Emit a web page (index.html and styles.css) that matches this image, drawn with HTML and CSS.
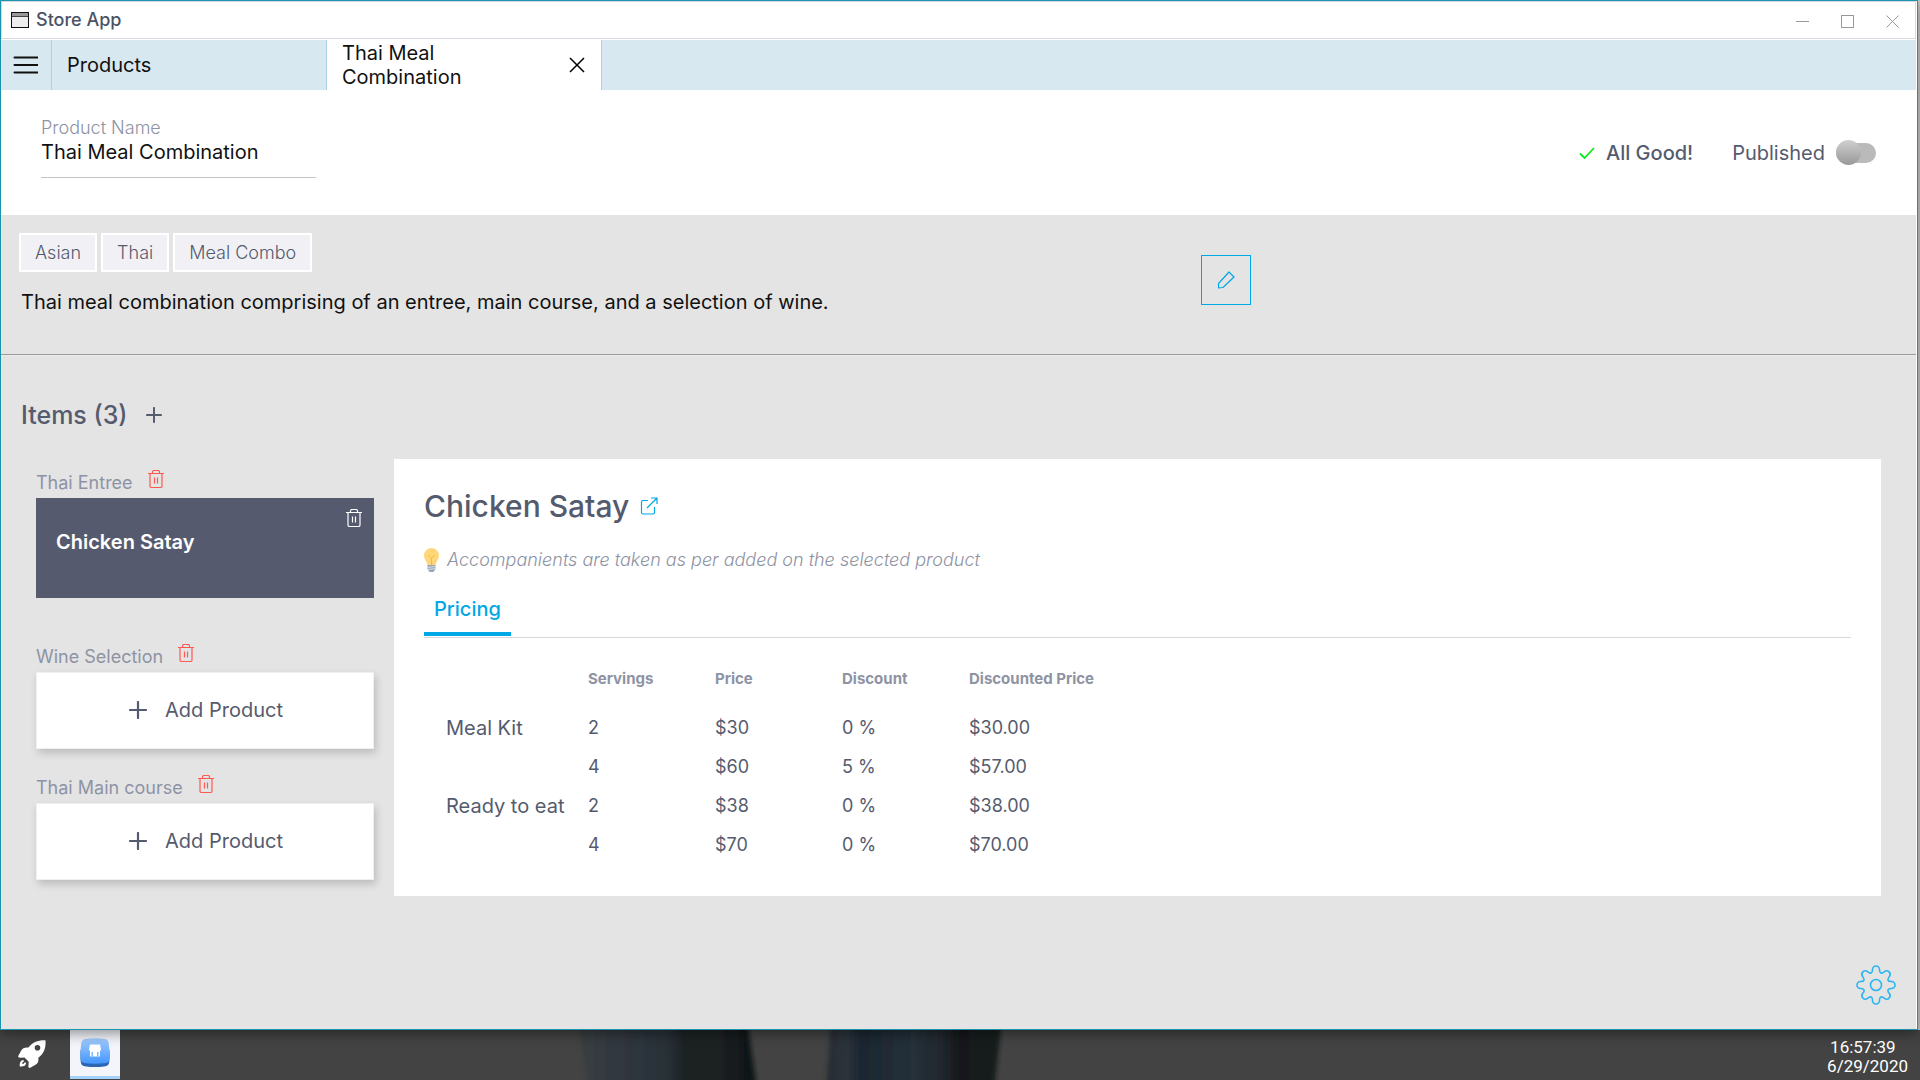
FILE: index.html
```html
<!DOCTYPE html>
<html lang="en">
<head>
<meta charset="utf-8">
<title>Store App</title>
<meta name="viewport" content="width=device-width, initial-scale=1">
<link rel="stylesheet" href="styles.css">
</head>
<body>
<svg class="defs" aria-hidden="true">
  <symbol id="trash" viewBox="0 0 16 18">
    <path d="M2 4v12q0 1.500 1.500 1.500h9q1.500 0 1.500-1.500V4M4.500 3.500V2Q4.500.500 6 .500h4q1.500 0 1.500 1.500v1.500M6.500 7.500v6M9.500 7.500v6M0 3.500h16" fill="none" stroke="currentColor" stroke-width="1.200"/>
  </symbol>
  <symbol id="plus" viewBox="0 0 18 18">
    <path d="M9 1v16M1 9h16" fill="none" stroke="currentColor" stroke-width="2.200" stroke-linecap="round"/>
  </symbol>
</svg>
<div class="desktop">
  <div class="window">
    <header class="titlebar">
      <svg class="app-icon" viewBox="0 0 18 16" aria-hidden="true">
        <rect x=".5" y=".5" width="17" height="15" fill="#eee" stroke="#111"/>
        <path d="M1 2.500h16" stroke="#999" stroke-width="3"/>
        <path d="M1 4.500h16" stroke="#444"/>
      </svg>
      <h1 class="app-title">Store App</h1>
      <button class="window-button" aria-label="Minimize"><svg viewBox="0 0 13 13"><path d="M0 6.500h13"/></svg></button>
      <button class="window-button" aria-label="Maximize"><svg viewBox="0 0 13 13"><rect x=".5" y=".5" width="12" height="12"/></svg></button>
      <button class="window-button" aria-label="Close"><svg viewBox="0 0 13 13"><path d="M.5.5l12 12M12.500.5l-12 12"/></svg></button>
    </header>

    <nav class="tabs">
      <button class="menu-button" aria-label="Menu">
        <svg viewBox="0 0 24 18"><path d="M1 1.500h23M1 9h23M1 16.500h23" fill="none" stroke="#111" stroke-width="2" stroke-linecap="round"/></svg>
      </button>
      <div class="tab"><a class="tab-link" href="#products">Products</a></div>
      <div class="tab tab-active">
        <a class="tab-link" href="#combination">Thai Meal Combination</a>
        <button class="tab-close" aria-label="Close tab">
          <svg viewBox="0 0 16 16"><path d="M1 1l14 14M15 1L1 15" fill="none" stroke="#000" stroke-width="1.500"/></svg>
        </button>
      </div>
    </nav>

    <section class="product-bar">
      <div class="field">
        <label for="product-name">Product Name</label>
        <input id="product-name" type="text" value="Thai Meal Combination">
      </div>
      <div class="status">
        <svg class="check" viewBox="0 0 16 12" aria-hidden="true"><path d="M1 6.500l4.500 4.500L15 1" fill="none" stroke="#0bea1b" stroke-width="1.800"/></svg>
        <span>All Good!</span>
      </div>
      <div class="publish">
        <label for="published">Published</label>
        <input id="published" class="switch" type="checkbox">
      </div>
    </section>

    <main class="content">
      <section class="summary">
        <div>
          <ul class="tags">
            <li>Asian</li>
            <li>Thai</li>
            <li>Meal Combo</li>
          </ul>
          <p class="description">Thai meal combination comprising of an entree, main course, and a selection of wine.</p>
        </div>
        <button class="edit-button" aria-label="Edit">
          <svg viewBox="0 0 18 18"><path d="M1.500 12.500L12 1l5 5L6 16.500l-4.500.5z" fill="none" stroke="currentColor" stroke-width="1.200" stroke-linejoin="round"/></svg>
        </button>
      </section>

      <div class="items-heading">
        <h2>Items (3)</h2>
        <button class="icon-button" aria-label="Add item"><svg class="plus-small"><use href="#plus"/></svg></button>
      </div>

      <div class="items">
        <div class="item-list">
          <section class="item">
            <div class="item-label"><h3>Thai Entree</h3><button class="icon-button" aria-label="Delete Thai Entree"><svg class="trash trash-red"><use href="#trash"/></svg></button></div>
            <div class="selected-card">
              <span>Chicken Satay</span>
              <button class="icon-button" aria-label="Remove Chicken Satay"><svg class="trash"><use href="#trash"/></svg></button>
            </div>
          </section>
          <section class="item">
            <div class="item-label"><h3>Wine Selection</h3><button class="icon-button" aria-label="Delete Wine Selection"><svg class="trash trash-red"><use href="#trash"/></svg></button></div>
            <button class="add-card"><svg class="plus"><use href="#plus"/></svg>Add Product</button>
          </section>
          <section class="item">
            <div class="item-label"><h3>Thai Main course</h3><button class="icon-button" aria-label="Delete Thai Main course"><svg class="trash trash-red"><use href="#trash"/></svg></button></div>
            <button class="add-card"><svg class="plus"><use href="#plus"/></svg>Add Product</button>
          </section>
        </div>

        <article class="panel">
          <div class="panel-title">
            <h2>Chicken Satay</h2>
            <a href="#chicken-satay" aria-label="Open product">
              <svg viewBox="0 0 18 18"><path d="M8 3.500H3Q1.500 3.500 1.500 5v10.500Q1.500 17 3 17h10q1.500 0 1.500-1.500V10M7 11L16.500 1.500M11 1h6v6" fill="none" stroke="currentColor" stroke-width="1.200"/></svg>
            </a>
          </div>
          <p class="note">
            <svg viewBox="0 0 15 24" aria-hidden="true">
              <path d="M7.500 0a7.500 7.500 0 0 1 7.500 7.500c0 3.500-2.500 5.500-3.500 9.500h-8C2.500 13 0 11 0 7.500A7.500 7.500 0 0 1 7.500 0z" fill="#ffd77a"/>
              <path d="M4.500 7L7.500 10.500 10.500 7M7.500 10v7" fill="none" stroke="#f2bd3c"/>
              <path d="M3.500 17h8v4l-2 3h-4l-2-3z" fill="#9aa7b4"/>
              <path d="M3.500 19.500l8-1M3.500 21.500l8-1" stroke="#d5dce2"/>
            </svg>
            <em>Accompanients are taken as per added on the selected product</em>
          </p>
          <div class="panel-tabs"><button class="panel-tab">Pricing</button></div>
          <table class="pricing">
            <thead>
              <tr><td></td><th scope="col">Servings</th><th scope="col">Price</th><th scope="col">Discount</th><th scope="col">Discounted Price</th></tr>
            </thead>
            <tbody>
              <tr><th scope="row">Meal Kit</th><td>2</td><td>$30</td><td>0 %</td><td>$30.00</td></tr>
              <tr><td></td><td>4</td><td>$60</td><td>5 %</td><td>$57.00</td></tr>
              <tr><th scope="row">Ready to eat</th><td>2</td><td>$38</td><td>0 %</td><td>$38.00</td></tr>
              <tr><td></td><td>4</td><td>$70</td><td>0 %</td><td>$70.00</td></tr>
            </tbody>
          </table>
        </article>
      </div>

      <button class="settings-button" aria-label="Settings">
        <svg viewBox="-20 -20 40 40" fill="none" stroke="currentColor" stroke-width="1.600" stroke-linejoin="round">
          <circle r="5.500"/>
          <path d="M-3.500 -15.500A3.500 3.500 0 0 1 3.500 -15.500C3.500 -11.500 5.500 -10.800 8.500 -13.400A3.500 3.500 0 0 1 13.400 -8.500C10.800 -5.500 11.500 -3.500 15.500 -3.500A3.500 3.500 0 0 1 15.500 3.500C11.500 3.500 10.800 5.500 13.400 8.500A3.500 3.500 0 0 1 8.500 13.400C5.500 10.800 3.500 11.500 3.500 15.500A3.500 3.500 0 0 1 -3.500 15.500C-3.500 11.500 -5.500 10.800 -8.500 13.400A3.500 3.500 0 0 1 -13.400 8.500C-10.800 5.500 -11.500 3.500 -15.500 3.500A3.500 3.500 0 0 1 -15.500 -3.500C-11.500 -3.500 -10.800 -5.500 -13.400 -8.500A3.500 3.500 0 0 1 -8.500 -13.400C-5.500 -10.800 -3.500 -11.500 -3.500 -15.500Z"/>
        </svg>
      </button>
    </main>
  </div>
</div>

<footer class="taskbar">
  <svg class="wallpaper" viewBox="0 0 1920 50" preserveAspectRatio="none" aria-hidden="true">
    <defs>
      <linearGradient id="leg-a"><stop offset="0" stop-color="#3a3e41"/><stop offset=".2" stop-color="#32383f"/><stop offset=".5" stop-color="#283038"/><stop offset=".6" stop-color="#1c2224"/><stop offset=".8" stop-color="#1b2022"/><stop offset=".95" stop-color="#101618"/></linearGradient>
      <linearGradient id="leg-b"><stop offset="0" stop-color="#272d33"/><stop offset=".12" stop-color="#2b323b"/><stop offset=".2" stop-color="#1c2731"/><stop offset=".5" stop-color="#25303a"/><stop offset=".66" stop-color="#20272d"/><stop offset=".76" stop-color="#16191b"/><stop offset=".95" stop-color="#181b1c"/></linearGradient>
      <filter id="soften"><feGaussianBlur stdDeviation="2"/></filter>
    </defs>
    <g filter="url(#soften)">
      <path d="M578 -10H747L757 60H588Z" fill="url(#leg-a)"/>
      <path d="M831 -10H1002L994 60H826Z" fill="url(#leg-b)"/>
    </g>
  </svg>
  <button class="launcher" aria-label="Launcher">
    <svg viewBox="0 0 28 28" aria-hidden="true">
      <path d="M27.500.3C20 0 14.500 2 10.500 7.500 7 7 4.500 8 3.200 10.500L.5 15.500c-.8 1.500 0 2.200 1.500 2.200l4.500-.2 4.200 4.200-.3 4.500c0 1.500.9 2.200 2.300 1.400l4.800-2.800c2.400-1.400 3.300-3.600 2.800-7C26 13.500 28 8 27.500.3zM19.500 5a2.800 2.800 0 1 1 0 5.600 2.800 2.800 0 0 1 0-5.600z" fill="#fff" fill-rule="evenodd"/>
      <path d="M5.500 20C2.500 20 1.500 23 1.800 26.500c3.500.3 6.300-.8 6.300-3.800l-1.400-.5c-.4 1-1.300 1.800-2.300 1.800-.3-1.200.4-2.300 1.600-2.500z" fill="#fff"/>
    </svg>
  </button>
  <button class="running-app" aria-label="Store App">
    <svg viewBox="0 0 30 30" aria-hidden="true">
      <defs><linearGradient id="tile" x2="0" y2="1"><stop offset="0" stop-color="#a4cdff"/><stop offset="1" stop-color="#4496ff"/></linearGradient></defs>
      <path d="M.5 12Q0 26 2 27q2 2 13 2t13-2q2-1 1.500-15z" fill="#2a66b5"/>
      <path d="M5 1Q15-.5 25 1q3 .5 3.700 4 1.300 9 .6 17-.3 2.500-3.300 3-11 1.500-22 0-3-.5-3.300-3Q0 14 1.300 5 2 1.500 5 1z" fill="url(#tile)"/>
      <path d="M10 6.500h10l1 5v1h-12v-1zM10 12.500h10V18.500H10z" fill="#fff"/>
      <path d="M11.500 14h1.500v4.500h-1.500zM17 14h1.500v4.500H17z" fill="#7db5ff"/>
    </svg>
  </button>
  <div class="clock"><time>16:57:39</time><time datetime="2020-06-29">6/29/2020</time></div>
</footer>
</body>
</html>
```
FILE: styles.css
```css
:root {
  --teal: #1a93ae;
  --blue: #00a8e6;
  --slate: #555b6e;
  --muted: #8e93a4;
  --canvas: #e4e4e4;
}

* {
  box-sizing: border-box;
}

body {
  margin: 0;
  min-height: 100vh;
  display: flex;
  flex-direction: column;
  background: #c8c8c8;
  color: #111;
  font: 400 20px/24px Inter, "Liberation Sans", sans-serif;
}

h1, h2, h3, p, ul {
  margin: 0;
  padding: 0;
}

button, input {
  margin: 0;
  padding: 0;
  border: 0;
  background: none;
  color: inherit;
  font: inherit;
}

a {
  color: inherit;
  text-decoration: none;
}

svg {
  display: block;
  flex: none;
}

.defs {
  position: absolute;
  width: 0;
  height: 0;
}

.desktop {
  flex: 1;
  display: flex;
  padding-right: 2px;
}

.window {
  flex: 1;
  display: flex;
  flex-direction: column;
  position: relative;
  z-index: 1;
  padding-right: 1px;
  border: 1px solid var(--teal);
  background: #fff;
  box-shadow: 0 4px 12px rgba(0, 0, 0, .4);
}

/* Title bar */
.titlebar {
  display: flex;
  align-items: center;
  height: 38px;
  margin-bottom: 1px;
  padding: 0 16px 0 9px;
  border: 1px solid #d6d9e0;
}

.app-icon {
  width: 18px;
  height: 16px;
}

.app-title {
  flex: 1;
  margin-left: 7px;
  color: #4a5468;
  font-size: 18px;
  font-weight: 500;
}

.window-button {
  width: 13px;
  margin-left: 32px;
}

.window-button svg {
  width: 13px;
  height: 13px;
  margin-top: 2px;
  fill: none;
  stroke: #999;
}

/* Document tabs */
.tabs {
  display: flex;
  height: 50px;
  background: #d8e8f0;
}

.menu-button {
  width: 51px;
  padding-left: 12px;
  border-right: 1px solid #abd3e6;
}

.menu-button svg {
  width: 25px;
  height: 18px;
}

.tab {
  display: flex;
  align-items: center;
  width: 275px;
  padding: 0 16px 0 15px;
  border-right: 1px solid #abd3e6;
}

.tab-active {
  background: #fff;
}

.tab-link {
  flex: 1;
  padding-right: 64px;
}

.tab-close svg {
  width: 16px;
  height: 16px;
}

/* Product name and status */
.product-bar {
  display: flex;
  align-items: center;
  height: 125px;
  padding: 0 40px;
  color: var(--slate);
}

.field {
  display: flex;
  flex-direction: column;
  flex: 0 1 275px;
  min-width: 0;
  margin-right: auto;
  margin-bottom: 12px;
}

.field label {
  color: var(--muted);
  font-size: 18px;
  font-weight: 300;
}

.field input {
  width: 100%;
  height: 38px;
  padding-bottom: 12px;
  border-bottom: 1px solid #c4c4c4;
  color: #111;
}

.status, .publish {
  display: flex;
  align-items: center;
}

.status {
  gap: 11px;
  margin-right: 39px;
  font-weight: 500;
}

.check {
  width: 16px;
  height: 12px;
}

.publish {
  gap: 11px;
}

.switch {
  appearance: none;
  display: flex;
  align-items: center;
  width: 40px;
  height: 20px;
  border-radius: 10px;
  background: #bababa;
}

.switch::before {
  content: "";
  width: 25px;
  height: 25px;
  border-radius: 50%;
  background: linear-gradient(#cfcfcf, #999);
}

/* Summary */
.content {
  flex: 1;
  position: relative;
  background: var(--canvas);
  color: var(--slate);
}

.summary {
  display: grid;
  grid-template-columns: 5fr 3fr;
  gap: 20px;
  padding: 18px 18px 40px;
  border-bottom: 1px solid #999;
}

.tags {
  display: flex;
  gap: 4px;
  margin-bottom: 18px;
  list-style: none;
}

.tags li {
  height: 39px;
  padding: 0 14px;
  border: 2px solid #fff;
  background: #f1f1f5;
  font-size: 18px;
  font-weight: 300;
  line-height: 35px;
}

.description {
  padding-left: 2px;
  color: #111;
}

.edit-button {
  display: grid;
  place-items: center;
  width: 50px;
  height: 50px;
  margin-top: 22px;
  border: 1px solid var(--blue);
  color: var(--blue);
}

.edit-button svg {
  width: 18px;
  height: 18px;
}

/* Items */
.items-heading {
  display: flex;
  align-items: center;
  gap: 18px;
  padding: 43px 20px 28px;
  border-top: 1px solid #ececec;
}

.items-heading h2 {
  font-size: 25px;
  font-weight: 500;
  line-height: 32px;
}

.plus-small {
  width: 16px;
  height: 16px;
}

.items {
  display: grid;
  grid-template-columns: 338px 1fr;
  align-items: start;
  gap: 20px;
  padding: 0 35px 40px;
}

.item-list {
  display: grid;
  gap: 26px;
  padding-top: 11px;
}

.item-label {
  display: flex;
  align-items: flex-start;
  gap: 15px;
  height: 28px;
}

.item-label h3 {
  color: var(--muted);
  font-size: 18px;
  font-weight: 400;
  line-height: 26px;
}

.trash {
  width: 16px;
  height: 18px;
}

.trash-red {
  color: #ff5a52;
}

.selected-card {
  display: flex;
  justify-content: space-between;
  align-items: flex-start;
  height: 100px;
  margin-bottom: 20px;
  padding: 11px 12px 0 20px;
  background: #555a6e;
  color: #fff;
  font-weight: 600;
}

.selected-card span {
  margin-top: 21px;
}

.add-card {
  display: flex;
  align-items: center;
  justify-content: center;
  gap: 18px;
  width: 100%;
  height: 77px;
  padding: 0 0 2px 2px;
  border: 1px solid #f0f0f0;
  background: #fff;
  box-shadow: 2px 4px 8px rgba(0, 0, 0, .18);
}

.plus {
  width: 18px;
  height: 18px;
}

/* Detail panel */
.panel {
  padding: 29px 30px 32px;
  background: #fff;
}

.panel-title {
  display: flex;
  align-items: center;
  gap: 11px;
  margin-bottom: 24px;
}

.panel-title h2 {
  font-size: 30px;
  font-weight: 500;
  line-height: 36px;
}

.panel-title a {
  color: var(--blue);
}

.panel-title svg {
  width: 18px;
  height: 18px;
}

.note {
  display: flex;
  gap: 8px;
  margin-bottom: 25px;
  color: var(--muted);
  font-size: 18px;
  font-weight: 300;
}

.note svg {
  width: 15px;
  height: 24px;
}

.panel-tabs {
  display: flex;
  padding-bottom: 1px;
  border-bottom: 1px solid #d9d9d9;
}

.panel-tab {
  padding: 0 10px 11px;
  border-bottom: 4px solid var(--blue);
  color: var(--blue);
  font-weight: 500;
}

.pricing {
  margin: 22px 0 0 22px;
  border-collapse: collapse;
  text-align: left;
}

.pricing th, .pricing td {
  min-width: 127px;
  height: 39px;
  padding: 0;
  font-size: 18px;
  font-weight: 400;
}

.pricing tr > :first-child {
  min-width: 142px;
}

.pricing thead th {
  height: 48px;
  padding-top: 9px;
  color: var(--muted);
  font-size: 15px;
  font-weight: 700;
  line-height: 20px;
  vertical-align: top;
}

.pricing tbody th {
  font-size: 20px;
}

.settings-button {
  position: absolute;
  right: 20px;
  bottom: 24px;
  color: #29b6f0;
}

.settings-button svg {
  width: 40px;
  height: 40px;
}

/* Taskbar */
.taskbar {
  display: flex;
  align-items: flex-start;
  position: relative;
  height: 50px;
  background: #434343;
  color: #fff;
}

.wallpaper {
  position: absolute;
  inset: 0;
  width: 100%;
  height: 100%;
}

.launcher {
  padding: 10px 24px 0 18px;
}

.launcher svg {
  width: 28px;
  height: 28px;
}

.launcher, .running-app, .clock {
  position: relative;
}

.running-app {
  display: grid;
  place-items: center;
  width: 50px;
  height: 49px;
  border-bottom: 3px solid #a5d0f8;
  background: #f4f5fb;
}

.running-app svg {
  width: 30px;
  height: 30px;
}

.clock {
  display: flex;
  flex-direction: column;
  margin: 8px 12px 0 auto;
  font: 400 17px/19px Roboto, sans-serif;
}

.clock time:first-child {
  padding-left: 3px;
}
```
